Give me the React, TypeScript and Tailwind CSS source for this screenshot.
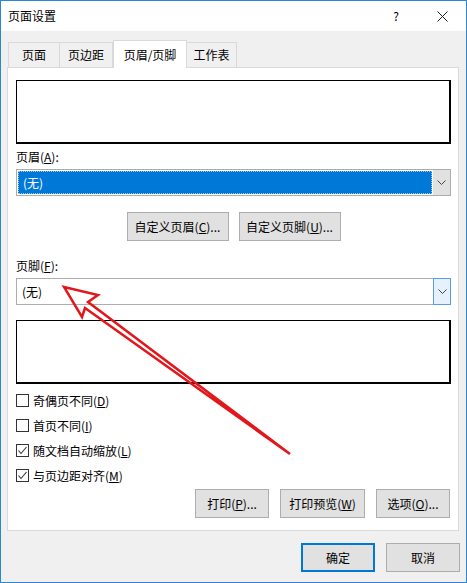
import React from 'react';

const font = "font-['Noto_Sans_CJK_SC','Liberation_Sans',sans-serif]";

const Chevron = () => (
  <svg width="9" height="6" viewBox="0 0 9 6" className="block">
    <polyline points="0.5,0.5 4.5,4.5 8.5,0.5" fill="none" stroke="#444" strokeWidth="1" />
  </svg>
);

const Btn: React.FC<{ w: string; children: React.ReactNode; primary?: boolean }> = ({ w, children, primary }) => (
  <div
    className={`${w} h-[29px] flex items-center justify-center bg-[#e1e1e1] text-[12px] leading-none text-black ${
      primary ? 'border-2 border-[#0078d7]' : 'border border-[#adadad]'
    }`}
  >
    {children}
  </div>
);

const Check: React.FC<{ checked?: boolean; children: React.ReactNode }> = ({ checked, children }) => (
  <div className="h-[25px] flex items-center gap-[4px]">
    <div className="w-[13px] h-[13px] border border-[#333] bg-white flex items-center justify-center">
      {checked && (
        <svg width="11" height="11" viewBox="0 0 11 11">
          <polyline points="1.5,5.5 4,8.5 9.5,2" fill="none" stroke="#333" strokeWidth="1.1" />
        </svg>
      )}
    </div>
    <span className="text-[12px] leading-none">{children}</span>
  </div>
);

export default function App() {
  return (
    <div className={`relative w-[467px] h-[583px] border border-[#2b86d4] bg-[#f0f0f0] flex flex-col text-black ${font}`}>
      {/* title bar */}
      <div className="h-[30px] bg-white flex items-center pl-[7px] pr-[18px] shrink-0">
        <span className="text-[12px] leading-none">页面设置</span>
        <span className="ml-auto text-[12px] leading-none mr-[38px]">?</span>
        <svg width="11" height="11" viewBox="0 0 11 11">
          <line x1="0.5" y1="0.5" x2="10.5" y2="10.5" stroke="#222" strokeWidth="1" />
          <line x1="10.5" y1="0.5" x2="0.5" y2="10.5" stroke="#222" strokeWidth="1" />
        </svg>
      </div>

      <div className="px-[6px] pt-[9px] flex flex-col">
        {/* tabs */}
        <div className="flex items-end h-[27px] pl-[1px] text-[12px]">
          <div className="w-[52px] h-[25px] border border-b-0 border-[#d9d9d9] flex items-center justify-center">页面</div>
          <div className="w-[53px] h-[25px] border border-b-0 border-l-0 border-[#d9d9d9] flex items-center justify-center">页边距</div>
          <div className="relative z-10 w-[74px] h-[28px] -mb-[1px] bg-white border border-b-0 border-[#d9d9d9] flex items-center justify-center">
            页眉/页脚
          </div>
          <div className="w-[50px] h-[25px] border border-b-0 border-l-0 border-[#d9d9d9] flex items-center justify-center">工作表</div>
        </div>

        {/* panel */}
        <div className="w-[452px] h-[464px] bg-white border border-[#d9d9d9] pl-[8px] pr-[7px] pt-[12px] flex flex-col">
          <div className="w-[435px] h-[64px] border border-black border-r-2 border-b-2 bg-white" />

          <div className="mt-[3px] h-[20px] flex items-center text-[12px]">
            页眉(<u>A</u>):
          </div>
          <div className="mt-[2px] w-[435px] h-[27px] border border-[#adadad] bg-white flex">
            <div className="flex-1 m-[1px] bg-[#0078d7] border border-dotted border-[#9cc8f0] flex items-center pl-[4px] text-[12px] text-white">
              (无)
            </div>
            <div className="w-[17px] bg-[#e1e1e1] flex items-center justify-center">
              <Chevron />
            </div>
          </div>

          <div className="mt-[16px] flex justify-center gap-[10px]">
            <Btn w="w-[102px]">
              自定义页眉(<u>C</u>)...
            </Btn>
            <Btn w="w-[102px]">
              自定义页脚(<u>U</u>)...
            </Btn>
          </div>

          <div className="mt-[15px] h-[20px] flex items-center text-[12px]">
            页脚(<u>F</u>):
          </div>
          <div className="mt-[2px] w-[435px] h-[27px] border border-[#adadad] bg-white flex">
            <div className="flex-1 flex items-center pl-[5px] text-[12px]">(无)</div>
            <div className="w-[18px] bg-[#e5f1fb] border border-[#569de5] -my-[1px] -mr-[1px] flex items-center justify-center">
              <Chevron />
            </div>
          </div>

          <div className="mt-[15px] w-[435px] h-[64px] border border-black border-r-2 border-b-2 bg-white" />

          <div className="mt-[4px] flex flex-col">
            <Check>
              奇偶页不同(<u>D</u>)
            </Check>
            <Check>
              首页不同(<u>I</u>)
            </Check>
            <Check checked>
              随文档自动缩放(<u>L</u>)
            </Check>
            <Check checked>
              与页边距对齐(<u>M</u>)
            </Check>
          </div>

          <div className="mt-[1px] flex justify-end gap-[11px] pr-[1px]">
            <Btn w="w-[74px]">
              打印(<u>P</u>)...
            </Btn>
            <Btn w="w-[85px]">
              打印预览(<u>W</u>)
            </Btn>
            <Btn w="w-[74px]">
              选项(<u>O</u>)...
            </Btn>
          </div>
        </div>

        {/* dialog buttons */}
        <div className="mt-[12px] flex justify-end gap-[11px]">
          <Btn w="w-[74px]" primary>
            确定
          </Btn>
          <Btn w="w-[74px]">取消</Btn>
        </div>
      </div>

      {/* annotation arrow */}
      <svg className="absolute left-[-1px] top-[-1px] pointer-events-none" width="467" height="583" viewBox="0 0 467 583">
        <polygon
          points="64,287 98,295 88,302 290,454 85,308 82,317"
          fill="none"
          stroke="#e3161b"
          strokeWidth="2.5"
          strokeLinejoin="miter"
        />
      </svg>
    </div>
  );
}
